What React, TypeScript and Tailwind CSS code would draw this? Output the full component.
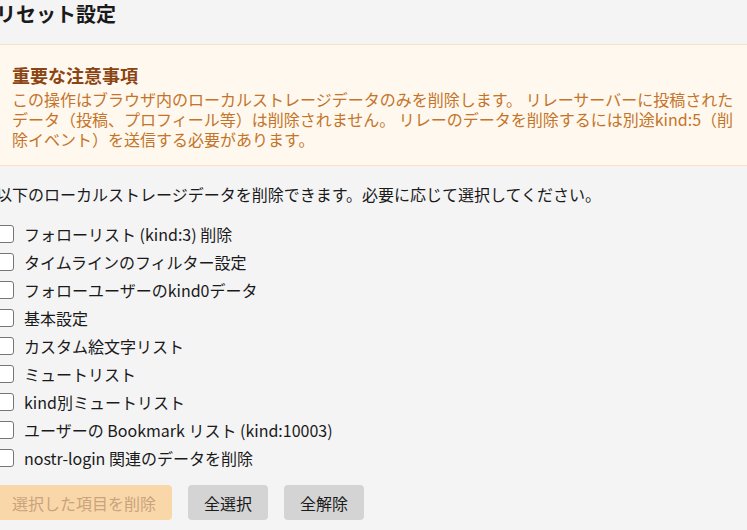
// リセット設定パネル

const items = [
  "フォローリスト (kind:3) 削除",
  "タイムラインのフィルター設定",
  "フォローユーザーのkind0データ",
  "基本設定",
  "カスタム絵文字リスト",
  "ミュートリスト",
  "kind別ミュートリスト",
  "ユーザーの Bookmark リスト (kind:10003)",
  "nostr-login 関連のデータを削除",
];

export default function App() {
  return (
    <div
      className="w-[747px] h-[530px] overflow-hidden bg-[#f4f4f5] text-[#1a1a1a]"
      style={{ fontFamily: '"Noto Sans CJK JP", "Noto Sans", sans-serif' }}
    >
      <div className="-ml-1 w-[755px]">
        {/* 見出し */}
        <h2 className="text-xl leading-7 font-bold mb-[16px]">リセット設定</h2>

        {/* 注意事項 */}
        <div className="bg-[#fff8ee] border-y border-[#fbe1c2] px-4 pt-4 pb-4">
          <h3 className="text-lg leading-7 font-bold text-[#8b4513]">
            重要な注意事項
          </h3>
          <p className="text-base leading-5 text-[#c4742a] w-[728px]">
            この操作はブラウザ内のローカルストレージデータのみを削除します。
            リレーサーバーに投稿されたデータ（投稿、プロフィール等）は削除されません。
            リレーのデータを削除するには別途kind:5（削除イベント）を送信する必要があります。
          </p>
        </div>

        <p className="mt-4 mb-[14px] text-base leading-6">
          以下のローカルストレージデータを削除できます。必要に応じて選択してください。
        </p>

        {/* チェックボックス一覧 */}
        <div className="flex flex-col">
          {items.map((label) => (
            <label key={label} className="flex items-center h-7 gap-[10px]">
              <span className="w-[18px] h-[18px] shrink-0 bg-white border border-[#767676] rounded-[3px]" />
              <span className="text-base leading-6">{label}</span>
            </label>
          ))}
        </div>

        {/* ボタン */}
        <div className="flex gap-4 mt-[13px]">
          <button className="h-[35px] px-4 rounded bg-[#fad7a8] text-[#c9a37f] text-base">
            選択した項目を削除
          </button>
          <button className="h-[35px] px-4 rounded bg-[#d4d4d4] text-[#1a1a1a] text-base">
            全選択
          </button>
          <button className="h-[35px] px-4 rounded bg-[#d4d4d4] text-[#1a1a1a] text-base">
            全解除
          </button>
        </div>
      </div>
    </div>
  );
}
